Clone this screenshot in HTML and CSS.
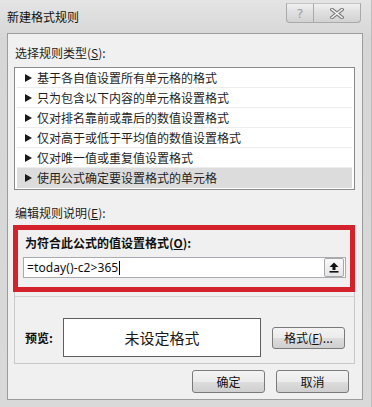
FILE: index.html
```html
<!DOCTYPE html>
<html lang="zh-CN">
<head>
    <meta charset="UTF-8">
    <title>新建格式规则</title>
    <link rel="stylesheet" href="styles.css">
</head>
<body>
    <div class="window">
        <div class="titlebar">
            <span class="title">新建格式规则</span>
            <div class="caption-buttons">
                <span class="cap-btn help">?</span>
                <span class="cap-btn close">
                    <svg width="14" height="11" viewBox="0 0 14 11">
                        <path d="M2 1.5 L12 9.5 M12 1.5 L2 9.5" stroke="#7c7c7c" stroke-width="3.6" stroke-linecap="square" fill="none"/>
                        <path d="M2 1.5 L12 9.5 M12 1.5 L2 9.5" stroke="#f4f4f4" stroke-width="1.6" stroke-linecap="square" fill="none"/>
                    </svg>
                </span>
            </div>
        </div>

        <div class="panel">
            <div class="section-label">选择规则类型(<u>S</u>):</div>
            <ul class="rule-list">
                <li><i class="tri"></i>基于各自值设置所有单元格的格式</li>
                <li><i class="tri"></i>只为包含以下内容的单元格设置格式</li>
                <li><i class="tri"></i>仅对排名靠前或靠后的数值设置格式</li>
                <li><i class="tri"></i>仅对高于或低于平均值的数值设置格式</li>
                <li><i class="tri"></i>仅对唯一值或重复值设置格式</li>
                <li class="selected"><i class="tri"></i>使用公式确定要设置格式的单元格</li>
            </ul>

            <div class="section-label edit-label">编辑规则说明(<u>E</u>):</div>
            <div class="desc-box">
                <div class="formula">
                    <div class="formula-label">为符合此公式的值设置格式(<u>O</u>):</div>
                    <div class="formula-input">
                        <span class="formula-text">=today()-c2&gt;365</span>
                        <span class="caret"></span>
                        <span class="collapse-btn">
                            <svg width="10" height="11" viewBox="0 0 10 11">
                                <path d="M5 0.5 L9.5 5 L6.5 5 L6.5 8 L3.5 8 L3.5 5 L0.5 5 Z" fill="#111"/>
                                <rect x="0.5" y="9" width="9" height="1.6" fill="#111"/>
                            </svg>
                        </span>
                    </div>
                </div>
                <div class="preview-row">
                    <span class="preview-label">预览:</span>
                    <div class="preview-box">未设定格式</div>
                    <span class="btn format-btn">格式(<u>F</u>)...</span>
                </div>
            </div>

            <div class="dialog-buttons">
                <span class="btn">确定</span>
                <span class="btn">取消</span>
            </div>
        </div>
    </div>
</body>
</html>
```

FILE: styles.css
```css
body {
    margin: 0;
    background: #e9e9e9;
    font-family: "Noto Sans CJK SC", "Noto Sans", sans-serif;
    font-size: 12px;
    color: #1e1e1e;
}
.window {
    width: 372px;
    height: 407px;
    box-sizing: border-box;
    background: linear-gradient(#e4e4e4, #d6d6d6 40px, #d9d9d9);
    border-right: 1px solid #bdbdbd;
    overflow: hidden;
}
.titlebar {
    height: 33px;
    box-sizing: border-box;
    display: flex;
    justify-content: space-between;
    align-items: flex-start;
    padding: 3px 10px 0 7px;
}
.title {
    margin-top: 6px;
    line-height: 16px;
    color: #111;
}
.caption-buttons {
    display: flex;
}
.cap-btn {
    height: 20px;
    box-sizing: border-box;
    display: flex;
    align-items: center;
    justify-content: center;
    border: 1px solid #a9a9a9;
    border-top-color: #c4c4c4;
    background: linear-gradient(#f0f0f0, #dedede 50%, #d2d2d2);
}
.help {
    width: 28px;
    border-radius: 0 0 0 4px;
    color: #a0a0a0;
    font-family: "DejaVu Sans", sans-serif;
    font-size: 13px;
}
.close {
    width: 47px;
    border-left: none;
    border-radius: 0 0 4px 0;
}
.panel {
    margin-left: 7px;
    width: 356px;
    height: 367px;
    box-sizing: border-box;
    border: 1px solid #9c9c9c;
    background: #f0f0f0;
    padding: 0 13px 0 0;
}
.section-label {
    margin: 11px 0 0 7px;
    line-height: 16px;
}
.rule-list {
    list-style: none;
    margin: 6px 0 0 6px;
    padding: 0 1px 1px 1px;
    width: 341px;
    box-sizing: border-box;
    background: #fff;
    border: 1px solid #8a8a8a;
}
.rule-list li {
    height: 20px;
    line-height: 20px;
    box-sizing: border-box;
    margin: 0 1px;
    padding-left: 8px;
    border-bottom: 1px solid #ededed;
    display: flex;
    align-items: center;
    white-space: nowrap;
}
.rule-list li.selected {
    background: #dcdcdc;
    border-bottom-color: #dcdcdc;
}
.tri {
    width: 0;
    height: 0;
    border-left: 7px solid #1a1a1a;
    border-top: 4px solid transparent;
    border-bottom: 4px solid transparent;
    margin-right: 5px;
}
.edit-label {
    margin-top: 15px;
}
.desc-box {
    margin: 4px 0 0 6px;
    width: 341px;
    box-sizing: border-box;
    border: 1px solid #c9c9c9;
}
.formula {
    margin: -1px -1px 0 -2px;
    height: 67px;
    box-sizing: border-box;
    border: 5px solid #d3222b;
    padding: 5px 4px 0 5px;
}
.formula-label {
    font-weight: bold;
    line-height: 16px;
    padding-left: 2px;
    color: #111;
}
.formula-input {
    margin-top: 6px;
    height: 21px;
    box-sizing: border-box;
    border: 1px solid #a9abb0;
    background: #fff;
    display: flex;
    align-items: center;
    padding-left: 3px;
}
.formula-text {
    font-family: "Noto Sans", sans-serif;
    font-size: 12px;
    color: #111;
    letter-spacing: 0.1px;
}
.caret {
    width: 1px;
    height: 14px;
    background: #000;
    margin-left: 1px;
}
.collapse-btn {
    margin-left: auto;
    margin-right: 1px;
    width: 20px;
    height: 19px;
    box-sizing: border-box;
    border: 1px solid #a8a8a8;
    border-radius: 2px;
    background: linear-gradient(#f8f8f8, #e6e6e6);
    display: flex;
    align-items: center;
    justify-content: center;
}
.preview-row {
    margin-top: 4px;
    border-top: 1px solid #d2d2d2;
    display: flex;
    align-items: center;
    padding: 21px 0 6px 10px;
}
.preview-label {
    width: 38px;
    font-weight: bold;
    color: #111;
}
.preview-box {
    width: 198px;
    height: 39px;
    box-sizing: border-box;
    border: 1px solid #5e5e5e;
    background: #fff;
    display: flex;
    align-items: center;
    justify-content: center;
    font-size: 15px;
    color: #1a1a1a;
}
.btn {
    width: 73px;
    height: 23px;
    box-sizing: border-box;
    border: 1px solid #7a7a7a;
    border-radius: 3px;
    background: linear-gradient(#f3f3f3, #ebebeb 50%, #dddddd 51%, #cfcfcf);
    display: flex;
    align-items: center;
    justify-content: center;
    color: #111;
}
.format-btn {
    height: 22px;
    margin-left: 11px;
}
.dialog-buttons {
    display: flex;
    justify-content: flex-end;
    gap: 11px;
    margin-top: 6px;
}
```
